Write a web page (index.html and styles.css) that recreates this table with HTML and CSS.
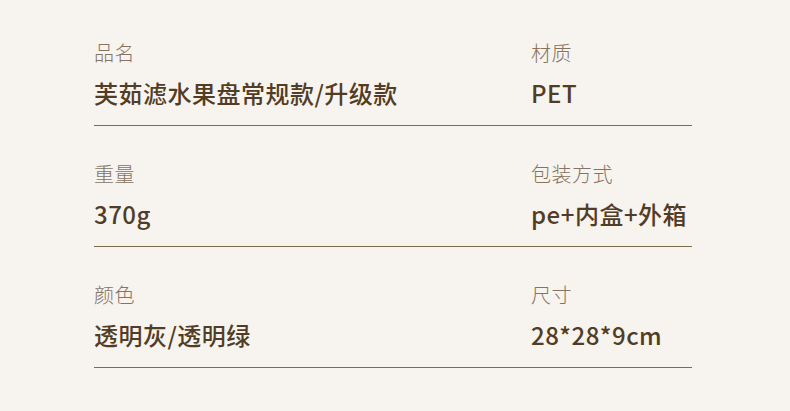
FILE: index.html
```html
<!DOCTYPE html>
<html lang="zh">
<head>
<meta charset="utf-8">
<link rel="stylesheet" href="styles.css">
</head>
<body>
<div class="spec">
  <div class="row">
    <div class="cell"><div class="label">品名</div><div class="value">芙茹滤水果盘常规款/升级款</div></div>
    <div class="cell"><div class="label">材质</div><div class="value">PET</div></div>
  </div>
  <div class="row">
    <div class="cell"><div class="label">重量</div><div class="value">370g</div></div>
    <div class="cell"><div class="label">包装方式</div><div class="value">pe+内盒+外箱</div></div>
  </div>
  <div class="row">
    <div class="cell"><div class="label">颜色</div><div class="value">透明灰/透明绿</div></div>
    <div class="cell"><div class="label">尺寸</div><div class="value">28*28*9cm</div></div>
  </div>
</div>
</body>
</html>
```
FILE: styles.css
```css
html, body {
  margin: 0;
  padding: 0;
  background: #f7f3ef;
}
body {
  width: 790px;
  height: 411px;
  overflow: hidden;
  font-family: "Noto Sans CJK SC", "Noto Sans", sans-serif;
}
.spec {
  padding: 5px 98px 0 94px;
  display: flex;
  flex-direction: column;
}
.row {
  display: grid;
  grid-template-columns: 437px 1fr;
  padding: 33px 0 14px;
  border-bottom: 1px solid #7f6a4e;
}
.label {
  font-size: 20px;
  line-height: 30px;
  font-weight: 300;
  color: #857462;
  letter-spacing: 0.5px;
}
.value {
  margin-top: 7px;
  font-size: 24px;
  line-height: 36px;
  font-weight: 500;
  color: #523d24;
  letter-spacing: 0.5px;
}
```
